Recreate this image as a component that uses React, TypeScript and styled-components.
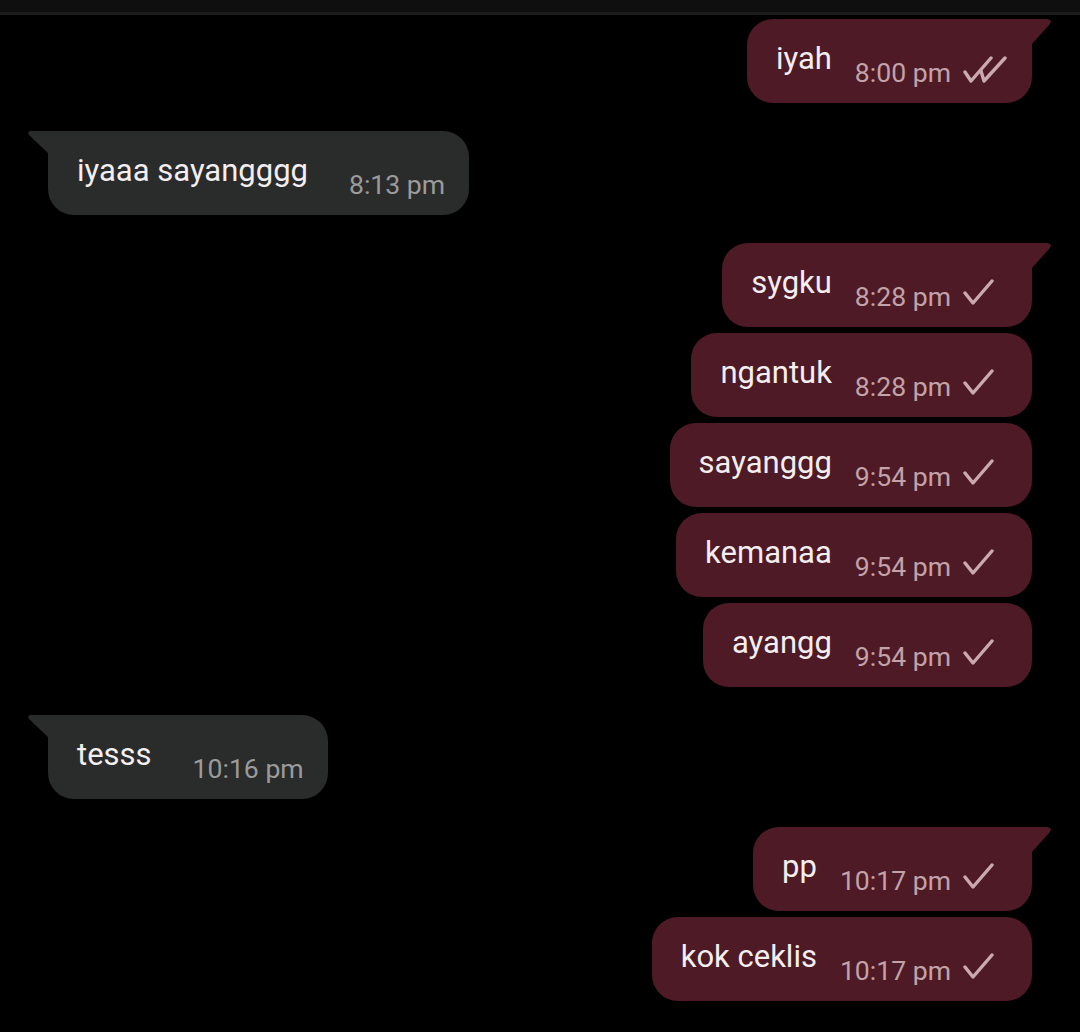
import React from "react";
import styled, { createGlobalStyle, css } from "styled-components";

const GlobalStyle = createGlobalStyle`
  html, body {
    margin: 0;
    padding: 0;
    background: #000;
  }
  body {
    font-family: Roboto, "Noto Sans", "Liberation Sans", sans-serif;
  }
`;

const Page = styled.div`
  width: 1080px;
  min-height: 1032px;
  background: #000;
  display: flex;
  flex-direction: column;
  overflow: hidden;
`;

const TopBar = styled.div`
  height: 12px;
  background: #0f0f0f;
  border-bottom: 3px solid #1c1c1c;
  flex-shrink: 0;
`;

const Thread = styled.div`
  display: flex;
  flex-direction: column;
  gap: 28px;
  padding: 4px 48px 0 48px;
`;

const Group = styled.div<{ $sent: boolean }>`
  display: flex;
  flex-direction: column;
  gap: 6px;
  align-items: ${(p) => (p.$sent ? "flex-end" : "flex-start")};
`;

const Bubble = styled.div<{ $sent: boolean; $tail: boolean }>`
  position: relative;
  box-sizing: border-box;
  height: 84px;
  display: flex;
  flex-direction: row;
  align-items: flex-end;
  padding: 22px 0 15px 29px;
  border-radius: 26px;
  background: ${(p) => (p.$sent ? "#4e1a25" : "#2a2b2b")};
  padding-right: ${(p) => (p.$sent ? "25px" : "24px")};

  ${(p) =>
    p.$tail &&
    p.$sent &&
    css`
      border-top-right-radius: 0;
      &::after {
        content: "";
        position: absolute;
        top: 0;
        right: -19px;
        width: 20px;
        height: 26px;
        background: #4e1a25;
        clip-path: polygon(0 0, 17px 0, 20px 2px, 19px 5px, 0 100%);
      }
    `}

  ${(p) =>
    p.$tail &&
    !p.$sent &&
    css`
      border-top-left-radius: 0;
      &::before {
        content: "";
        position: absolute;
        top: 0;
        left: -20px;
        width: 21px;
        height: 23px;
        background: #2a2b2b;
        clip-path: polygon(3px 0, 100% 0, 100% 100%, 1px 4px, 0 1px);
      }
    `}
`;

const Text = styled.span`
  font-size: 31px;
  line-height: 36px;
  color: #f3eef0;
  margin-bottom: 11px;
  white-space: nowrap;
`;

const Meta = styled.div<{ $sent: boolean }>`
  display: flex;
  align-items: flex-end;
  margin-left: ${(p) => (p.$sent ? "23px" : "41px")};
`;

const Time = styled.span<{ $sent: boolean }>`
  font-size: 26.6px;
  line-height: 30px;
  color: ${(p) => (p.$sent ? "#c3a2a9" : "#9b9b9b")};
  white-space: nowrap;
`;

const CheckBox = styled.svg`
  width: 44px;
  height: 28px;
  margin-left: 12px;
  margin-bottom: 5px;
  flex-shrink: 0;
`;

const tickColor = "#cba9b0";

function Ticks({ double }: { double: boolean }) {
  return (
    <CheckBox viewBox="0 0 44 28" fill="none">
      {double ? (
        <>
          <path
            d="M2 17 L8 26 L28 3"
            stroke={tickColor}
            strokeWidth={3.4}
            strokeLinecap="round"
            strokeLinejoin="round"
          />
          <path
            d="M18 16 L21 26 L42 3"
            stroke={tickColor}
            strokeWidth={3.4}
            strokeLinecap="round"
            strokeLinejoin="round"
          />
        </>
      ) : (
        <path
          d="M2 14 L10 24 L29 2"
          stroke={tickColor}
          strokeWidth={3.4}
          strokeLinecap="round"
          strokeLinejoin="round"
        />
      )}
    </CheckBox>
  );
}

type Msg = { text: string; time: string; read?: boolean };
type G = { sent: boolean; msgs: Msg[] };

const groups: G[] = [
  { sent: true, msgs: [{ text: "iyah", time: "8:00 pm", read: true }] },
  { sent: false, msgs: [{ text: "iyaaa sayangggg", time: "8:13 pm" }] },
  {
    sent: true,
    msgs: [
      { text: "sygku", time: "8:28 pm" },
      { text: "ngantuk", time: "8:28 pm" },
      { text: "sayanggg", time: "9:54 pm" },
      { text: "kemanaa", time: "9:54 pm" },
      { text: "ayangg", time: "9:54 pm" },
    ],
  },
  { sent: false, msgs: [{ text: "tesss", time: "10:16 pm" }] },
  {
    sent: true,
    msgs: [
      { text: "pp", time: "10:17 pm" },
      { text: "kok ceklis", time: "10:17 pm" },
    ],
  },
];

export default function App() {
  return (
    <Page>
      <GlobalStyle />
      <TopBar />
      <Thread>
        {groups.map((g, gi) => (
          <Group key={gi} $sent={g.sent}>
            {g.msgs.map((m, mi) => (
              <Bubble key={mi} $sent={g.sent} $tail={mi === 0}>
                <Text>{m.text}</Text>
                <Meta $sent={g.sent}>
                  <Time $sent={g.sent}>{m.time}</Time>
                  {g.sent && <Ticks double={!!m.read} />}
                </Meta>
              </Bubble>
            ))}
          </Group>
        ))}
      </Thread>
    </Page>
  );
}
